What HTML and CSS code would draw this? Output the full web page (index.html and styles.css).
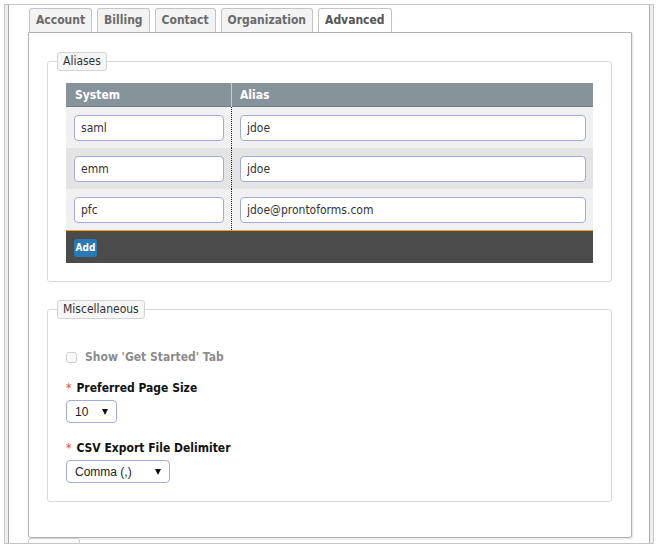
FILE: index.html
```html
<!DOCTYPE html>
<html lang="en">
<head>
<meta charset="utf-8">
<title>Advanced</title>
<link rel="stylesheet" href="styles.css">
</head>
<body>
<div class="frame">
  <div class="inner">
    <div class="tabs">
      <div class="tab">Account</div>
      <div class="tab">Billing</div>
      <div class="tab">Contact</div>
      <div class="tab">Organization</div>
      <div class="tab active">Advanced</div>
    </div>
    <div class="panel">
      <fieldset class="group">
        <legend class="legend">Aliases</legend>
        <div class="group-body">
          <div class="grid">
            <div class="grid-head">
              <div class="hcell first">System</div>
              <div class="hcell">Alias</div>
            </div>
            <div class="grid-row">
              <div class="cell first"><input class="field" type="text" value="saml"></div>
              <div class="cell"><input class="field" type="text" value="jdoe"></div>
            </div>
            <div class="grid-row alt">
              <div class="cell first"><input class="field" type="text" value="emm"></div>
              <div class="cell"><input class="field" type="text" value="jdoe"></div>
            </div>
            <div class="grid-row">
              <div class="cell first"><input class="field" type="text" value="pfc"></div>
              <div class="cell"><input class="field" type="text" value="jdoe@prontoforms.com"></div>
            </div>
            <div class="grid-foot">
              <button class="add-btn" type="button">Add</button>
            </div>
          </div>
        </div>
      </fieldset>

      <fieldset class="group misc">
        <legend class="legend">Miscellaneous</legend>
        <div class="group-body misc-body">
          <label class="check-row">
            <input class="check" type="checkbox" disabled>
            <span class="check-label">Show 'Get Started' Tab</span>
          </label>
          <div class="field-label first-label"><span class="req">*</span>Preferred Page Size</div>
          <div class="select-wrap small">
            <select class="select">
              <option>10</option>
            </select>
          </div>
          <div class="field-label"><span class="req">*</span>CSV Export File Delimiter</div>
          <div class="select-wrap wide">
            <select class="select">
              <option>Comma (,)</option>
            </select>
          </div>
        </div>
      </fieldset>
    </div>
    <div class="bottom-tabs"><div class="btab"></div></div>
  </div>
</div>
</body>
</html>
```

FILE: styles.css
```css
html, body {
  margin: 0;
  padding: 0;
  background: #fff;
}

body {
  font-family: "DejaVu Sans Condensed", "DejaVu Sans", sans-serif;
  font-size: 12px;
  color: #333;
}

.frame {
  margin: 4px 0 0 4px;
  width: 650px;
  height: 540px;
  box-sizing: border-box;
  border: 1px solid #c6c6c6;
  padding: 0 3px;
  background: #eeeeee;
  overflow: hidden;
}

.inner {
  height: 100%;
  box-sizing: border-box;
  background: #fff;
  border-left: 1px solid #a9a9a9;
  border-right: 1px solid #a9a9a9;
  padding: 3px 0 0 19px;
  overflow: hidden;
}

.tabs {
  display: flex;
  gap: 5px;
  margin-left: 1px;
  height: 24px;
}

.tab {
  box-sizing: border-box;
  height: 24px;
  padding: 0 6px;
  border: 1px solid #c4c4c4;
  border-bottom: none;
  border-radius: 3px 3px 0 0;
  background: #f3f3f3;
  color: #6a6a6a;
  font-weight: bold;
  font-size: 12px;
  line-height: 23px;
}

.tab.active {
  background: #fff;
  color: #555;
}

.panel {
  width: 604px;
  height: 506px;
  box-sizing: border-box;
  border: 1px solid #b2b2b2;
  border-radius: 0 0 3px 3px;
  box-shadow: 1px 1px 2px rgba(0, 0, 0, 0.12);
  padding: 19px 19px 0 18px;
  background: #fff;
}

.group {
  margin: 0;
  padding: 0;
  min-width: 0;
  border: 1px solid #d9d9d9;
  border-radius: 3px;
}

.legend {
  margin-left: 9px;
  padding: 0 5px;
  height: 19px;
  box-sizing: border-box;
  border: 1px solid #d4d4d4;
  border-radius: 3px;
  background: #f6f6f6;
  font-size: 12px;
  line-height: 17px;
  color: #333;
}

.group-body {
  padding: 12px 18px 18px;
}

.grid-head {
  display: grid;
  grid-template-columns: 166px 1fr;
  height: 24px;
  box-sizing: border-box;
  background: #87939a;
  border-bottom: 1px solid #737b80;
}

.hcell {
  color: #fff;
  font-weight: bold;
  font-size: 12px;
  line-height: 24px;
  padding-left: 8px;
}

.hcell.first {
  padding-left: 9px;
  border-right: 1px solid #c9cdd0;
}

.grid-row {
  display: grid;
  grid-template-columns: 166px 1fr;
  height: 41px;
  background: #f0f0f0;
}

.grid-row.alt {
  background: #e4e4e4;
}

.cell {
  padding: 8px 7px 0 8px;
}

.cell.first {
  border-right: 1px dotted #222;
}

.field {
  display: block;
  width: 100%;
  height: 26px;
  box-sizing: border-box;
  margin: 0;
  border: 1px solid #a3acd9;
  border-radius: 4px;
  padding: 0 6px;
  background: #fff;
  font-family: "DejaVu Sans Condensed", "DejaVu Sans", sans-serif;
  font-size: 12px;
  color: #333;
}

.grid-foot {
  height: 24px;
  border-top: 1px solid #f6a01a;
  background: #4b4b4b;
  padding: 8px 0 0 8px;
}

.add-btn {
  display: block;
  width: 23px;
  height: 18px;
  margin: 0;
  padding: 0;
  border: none;
  border-radius: 3px;
  background: #2979b7;
  color: #fff;
  text-align: center;
  font-family: "DejaVu Sans Condensed", "DejaVu Sans", sans-serif;
  font-weight: bold;
  font-size: 10px;
  line-height: 18px;
}

.misc {
  margin-top: 18px;
}

.misc-body {
  padding: 28px 18px 18px;
}

.check-row {
  display: flex;
  align-items: center;
  height: 20px;
}

.check {
  margin: 0 8px 0 0;
  width: 11px;
  height: 11px;
}

.check-label {
  font-weight: bold;
  color: #8c8c8c;
  font-size: 12px;
}

.field-label {
  margin-top: 17px;
  height: 16px;
  line-height: 16px;
  font-weight: bold;
  color: #111;
  font-size: 12px;
}

.field-label.first-label {
  margin-top: 13px;
}

.req {
  color: #e0483e;
  font-weight: normal;
  margin-right: 5px;
}

.select-wrap {
  position: relative;
  margin-top: 4px;
  height: 23px;
}

.select-wrap.small {
  width: 51px;
}

.select-wrap.wide {
  width: 104px;
}

.select {
  appearance: none;
  -webkit-appearance: none;
  display: block;
  width: 100%;
  height: 23px;
  box-sizing: border-box;
  margin: 0;
  border: 1px solid #a3acd9;
  border-radius: 4px;
  padding: 0 0 0 8px;
  background: #fff;
  font-family: "Liberation Sans", Arial, sans-serif;
  font-size: 12px;
  color: #222;
}

.select-wrap::after {
  content: "";
  position: absolute;
  right: 9px;
  top: 9px;
  width: 0;
  height: 0;
  border-left: 3.5px solid transparent;
  border-right: 3.5px solid transparent;
  border-top: 6px solid #111;
  pointer-events: none;
}

.bottom-tabs {
  display: flex;
  height: 20px;
}

.btab {
  width: 52px;
  height: 20px;
  box-sizing: border-box;
  border: 1px solid #cfcfcf;
  border-radius: 3px 3px 0 0;
  background: #fafafa;
}
```
